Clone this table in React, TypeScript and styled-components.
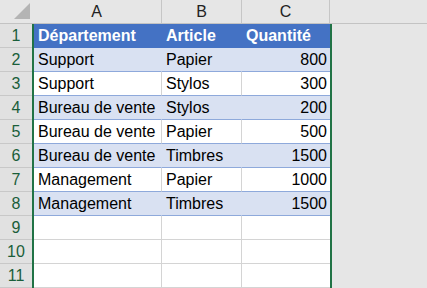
import React from "react"
import styled, { createGlobalStyle } from "styled-components"

const GlobalStyle = createGlobalStyle`
  html, body {
    margin: 0;
    padding: 0;
    background: #e6e6e6;
  }
  * { box-sizing: border-box; }
`

const Sheet = styled.div`
  width: 427px;
  height: 288px;
  overflow: hidden;
  display: flex;
  flex-direction: column;
  background: #e6e6e6;
  font-family: "Liberation Sans", Arial, sans-serif;
`

const HeaderBar = styled.div`
  display: flex;
  flex: 0 0 24px;
  height: 24px;
  border-bottom: 1px solid #c3c3c3;
`

const Corner = styled.div`
  width: 32px;
  height: 23px;
  display: flex;
  align-items: flex-start;
  justify-content: flex-start;
`

const ColHead = styled.div<{ $w: number }>`
  width: ${p => p.$w}px;
  height: 23px;
  border-right: 1px solid #c6c6c6;
  display: flex;
  align-items: center;
  justify-content: center;
  font-size: 16px;
  color: #222;
  padding-top: 1px;
`

const Row = styled.div`
  display: flex;
  flex: 0 0 24px;
  height: 24px;
`

const RowNum = styled.div`
  width: 32px;
  height: 24px;
  background: #e1e1e1;
  border-bottom: 1px solid #c8c8c8;
  display: flex;
  align-items: center;
  justify-content: center;
  font-size: 16px;
  color: #1a5e3a;
  padding-top: 1px;
`

const Body = styled.div`
  display: flex;
  border-left: 2px solid #217346;
  border-right: 2px solid #217346;
  background: #fff;
`

type Kind = "head" | "band" | "plain" | "empty"

const bg: Record<Kind, string> = {
  head: "#4472c4",
  band: "#d9e1f2",
  plain: "#ffffff",
  empty: "#ffffff",
}

const rowLine: Record<Kind, string> = {
  head: "#4472c4",
  band: "#8ea9db",
  plain: "#8ea9db",
  empty: "#d4d4d4",
}

const colLine: Record<Kind, string> = {
  head: "#4472c4",
  band: "#d9e1f2",
  plain: "#d4d4d4",
  empty: "#d4d4d4",
}

const Cell = styled.div<{ $w: number; $kind: Kind; $right?: boolean; $last?: boolean }>`
  width: ${p => p.$w}px;
  height: 24px;
  background: ${p => bg[p.$kind]};
  border-bottom: 1px solid ${p => rowLine[p.$kind]};
  border-right: ${p => (p.$last ? "none" : `1px solid ${colLine[p.$kind]}`)};
  display: flex;
  align-items: center;
  justify-content: ${p => (p.$right ? "flex-end" : "flex-start")};
  padding: 1px 3px 0 4px;
  font-size: 16px;
  font-weight: ${p => (p.$kind === "head" ? 700 : 400)};
  color: ${p => (p.$kind === "head" ? "#ffffff" : "#000000")};
  white-space: nowrap;
  overflow: hidden;
`

const widths = [128, 80, 88]

const rows: string[][] = [
  ["Département", "Article", "Quantité"],
  ["Support", "Papier", "800"],
  ["Support", "Stylos", "300"],
  ["Bureau de vente", "Stylos", "200"],
  ["Bureau de vente", "Papier", "500"],
  ["Bureau de vente", "Timbres", "1500"],
  ["Management", "Papier", "1000"],
  ["Management", "Timbres", "1500"],
  ["", "", ""],
  ["", "", ""],
  ["", "", ""],
]

const kindOf = (i: number): Kind => {
  if (i === 0) return "head"
  if (i >= 8) return "empty"
  return i % 2 === 1 ? "band" : "plain"
}

export default function App() {
  return (
    <>
      <GlobalStyle />
      <Sheet>
        <HeaderBar>
          <Corner>
            <svg width="32" height="23" viewBox="0 0 32 23">
              <polygon points="14,19 30,19 30,3" fill="#b4b4b4" />
            </svg>
          </Corner>
          <ColHead $w={130}>A</ColHead>
          <ColHead $w={80}>B</ColHead>
          <ColHead $w={88}>C</ColHead>
        </HeaderBar>
        {rows.map((r, i) => (
          <Row key={i}>
            <RowNum>{i + 1}</RowNum>
            <Body>
              {r.map((v, j) => (
                <Cell
                  key={j}
                  $w={widths[j]}
                  $kind={kindOf(i)}
                  $right={j === 2 && i > 0}
                  $last={j === 2}
                >
                  {v}
                </Cell>
              ))}
            </Body>
          </Row>
        ))}
      </Sheet>
    </>
  )
}
